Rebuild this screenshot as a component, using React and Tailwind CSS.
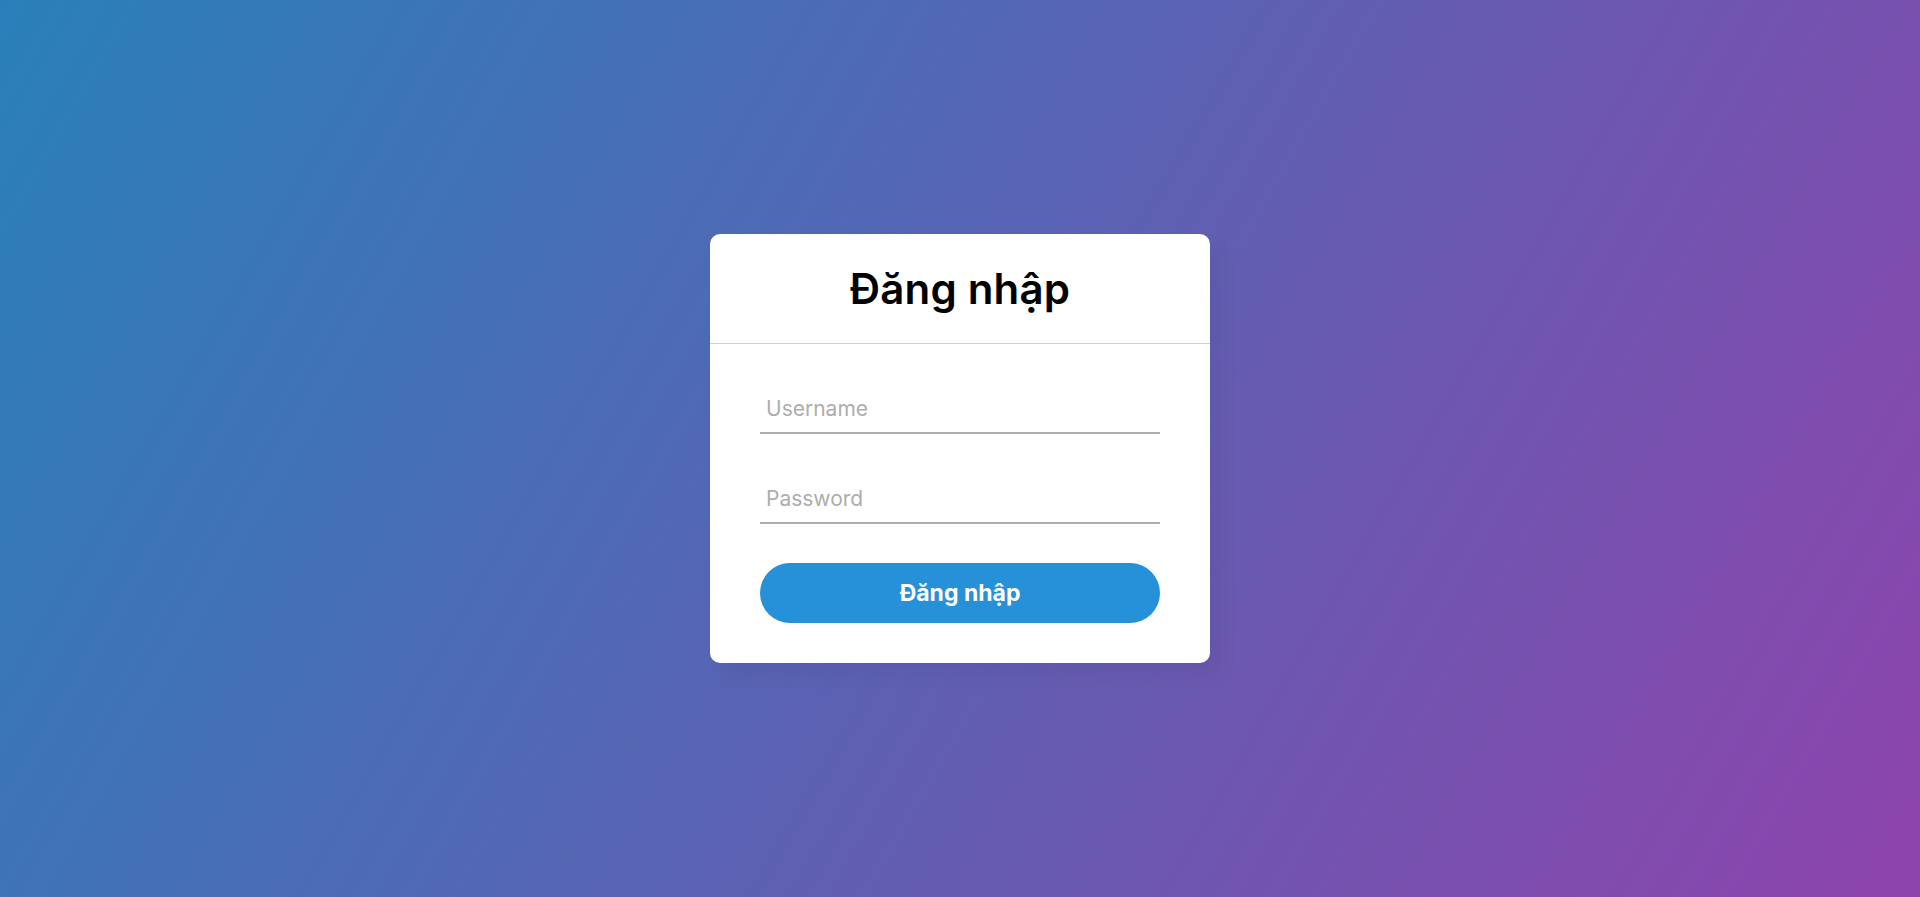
import React from 'react';

const font = { fontFamily: 'Inter, "Noto Sans", sans-serif' };

const Field = ({ type, placeholder }) => (
  <div className="h-[40px] border-b-2 border-[#adadad]">
    <input
      type={type}
      placeholder={placeholder}
      className="w-full h-[38px] pb-[9px] pl-[6px] bg-transparent outline-none text-[21px] text-[#333] placeholder:text-[#adadad]"
    />
  </div>
);

const App = () => {
  return (
    <div
      className="min-h-screen w-full flex items-center justify-center bg-[linear-gradient(120deg,#2980b9,#8e44ad)]"
      style={font}
    >
      <div className="w-[500px] bg-white rounded-[10px] shadow-[12px_12px_19px_rgba(0,0,0,0.05)]">
        <div className="h-[110px] flex items-center justify-center border-b border-[#d2d2d2]">
          <h1 className="text-[42px] leading-[48px] font-semibold tracking-[0.2px] text-black">Đăng nhập</h1>
        </div>
        <form className="px-[50px] pt-[50px] pb-[40px]" onSubmit={(e) => e.preventDefault()}>
          <div className="flex flex-col gap-[50px]">
            <Field type="text" placeholder="Username" />
            <Field type="password" placeholder="Password" />
          </div>
          <button
            type="submit"
            className="mt-[39px] w-full h-[60px] rounded-full bg-[#2691d9] text-white text-[23px] font-bold"
          >
            Đăng nhập
          </button>
        </form>
      </div>
    </div>
  );
};

export default App;
